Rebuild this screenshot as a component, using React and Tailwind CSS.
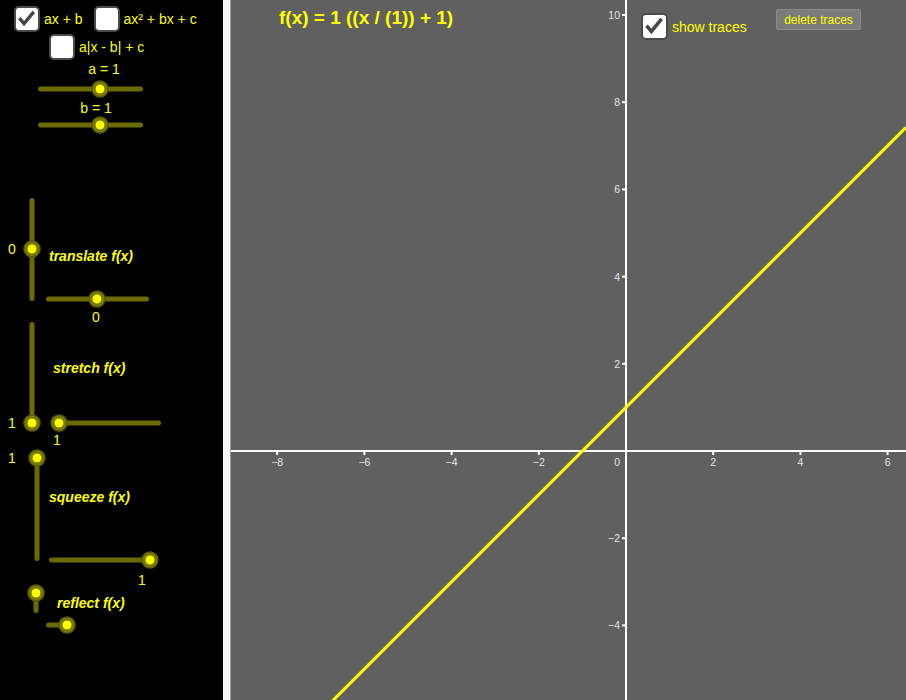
import React from "react";

const U = 43.6;
const OX = 626;
const OY = 451;

function CheckBox({ checked, big }) {
  return (
    <div
      className={
        big
          ? "h-[27px] w-[27px] shrink-0 rounded-[5px] border-2 border-[#4a4a4a] bg-white"
          : "h-[26px] w-[26px] shrink-0 rounded-[5px] border-2 border-[#4a4a4a] bg-white"
      }
    >
      {checked && (
        <svg viewBox="0 0 26 26" className="block h-full w-full">
          <path
            d="M4 12 L9.5 18.5 L21 4.5"
            fill="none"
            stroke="#464646"
            strokeWidth="4"
            strokeLinecap="butt"
            strokeLinejoin="miter"
          />
        </svg>
      )}
    </div>
  );
}

function Knob({ x, y }) {
  return (
    <g>
      <circle cx={x} cy={y} r="8" fill="#7d7d00" stroke="#5a5a00" strokeWidth="1.5" />
      <circle cx={x} cy={y} r="5" fill="#ffff00" stroke="#555500" strokeWidth="0.8" />
    </g>
  );
}

function Track({ x1, y1, x2, y2 }) {
  return (
    <line x1={x1} y1={y1} x2={x2} y2={y2} stroke="#6b6b00" strokeWidth="5" strokeLinecap="round" />
  );
}

function LeftPanel() {
  const label = "fill-[#ffff00] text-[14px]";
  const title = "fill-[#ffff00] text-[14px] font-bold italic";
  return (
    <div className="flex h-[700px] w-[223px] shrink-0 flex-col bg-black">
      <div className="flex flex-col gap-[1px] pt-[6px] text-[14px] leading-none text-[#ffff00]">
        <div className="flex h-[26px] items-center pl-[14px]">
          <CheckBox checked />
          <span className="ml-[4px]">ax + b</span>
          <div className="ml-[11px]">
            <CheckBox />
          </div>
          <span className="ml-[4px]">ax² + bx + c</span>
        </div>
        <div className="flex h-[27px] items-center pl-[49px]">
          <CheckBox />
          <span className="ml-[4px]">a|x - b| + c</span>
        </div>
      </div>
      <svg width="223" height="640" viewBox="0 60 223 640" className="block">
        <text x="104" y="74" textAnchor="middle" className={label}>a = 1</text>
        <Track x1={40.5} y1={89} x2={140.5} y2={89} />
        <Knob x={100} y={89} />
        <text x="96" y="113" textAnchor="middle" className={label}>b = 1</text>
        <Track x1={40.5} y1={125} x2={140.5} y2={125} />
        <Knob x={100} y={125} />

        <Track x1={32} y1={200.5} x2={32} y2={298.5} />
        <Knob x={32} y={249} />
        <text x="12" y="254" textAnchor="middle" className={label}>0</text>
        <text x="49" y="261" className={title}>translate f(x)</text>
        <Track x1={48.5} y1={299} x2={146.5} y2={299} />
        <Knob x={97} y={299} />
        <text x="96" y="322" textAnchor="middle" className={label}>0</text>

        <Track x1={32} y1={324.5} x2={32} y2={423} />
        <Knob x={32} y={423} />
        <text x="12" y="428" textAnchor="middle" className={label}>1</text>
        <text x="53" y="373" className={title}>stretch f(x)</text>
        <Track x1={59} y1={423} x2={158.5} y2={423} />
        <Knob x={59} y={423} />
        <text x="57" y="445" textAnchor="middle" className={label}>1</text>

        <Track x1={37} y1={458} x2={37} y2={558.5} />
        <Knob x={37} y={458} />
        <text x="12" y="463" textAnchor="middle" className={label}>1</text>
        <text x="49" y="502" className={title}>squeeze f(x)</text>
        <Track x1={51.5} y1={560} x2={150} y2={560} />
        <Knob x={150} y={560} />
        <text x="142" y="585" textAnchor="middle" className={label}>1</text>

        <Track x1={36} y1={593} x2={36} y2={610.5} />
        <Knob x={36} y={593} />
        <text x="57" y="608" className={title}>reflect f(x)</text>
        <Track x1={48.5} y1={625} x2={67} y2={625} />
        <Knob x={67} y={625} />
      </svg>
    </div>
  );
}

function fmt(v) {
  return v < 0 ? "\u2212" + Math.abs(v) : String(v);
}

function Graph() {
  const xs = [-8, -6, -4, -2, 2, 4, 6];
  const ys = [10, 8, 6, 4, 2, -2, -4];
  const lbl = "fill-[#e6e6e6] text-[10.5px]";
  const x1 = 231;
  const y1 = OY - ((x1 - OX) / U + 1) * U;
  const x2 = 906;
  const y2 = OY - ((x2 - OX) / U + 1) * U;
  return (
    <div className="relative h-[700px] flex-1 overflow-hidden bg-[#606060]">
      <svg width="675" height="700" viewBox="231 0 675 700" className="block">
        <line x1="231" y1={OY} x2="906" y2={OY} stroke="#ffffff" strokeWidth="2" />
        <line x1={OX} y1="0" x2={OX} y2="700" stroke="#ffffff" strokeWidth="2" />
        {xs.map((v) => {
          const px = OX + v * U;
          return (
            <g key={"x" + v}>
              <line x1={px} y1={OY} x2={px} y2={OY + 4} stroke="#ffffff" strokeWidth="2" />
              <text x={px} y={OY + 15} textAnchor="middle" className={lbl}>
                {fmt(v)}
              </text>
            </g>
          );
        })}
        {ys.map((v) => {
          const py = OY - v * U;
          return (
            <g key={"y" + v}>
              <line x1={OX - 4} y1={py} x2={OX} y2={py} stroke="#ffffff" strokeWidth="2" />
              <text x={OX - 6} y={py + 4} textAnchor="end" className={lbl}>
                {fmt(v)}
              </text>
            </g>
          );
        })}
        <text x={OX - 6} y={OY + 15} textAnchor="end" className={lbl}>0</text>
        <line x1={x1} y1={y1} x2={x2} y2={y2} stroke="#ffff00" strokeWidth="3" />
      </svg>

      <div className="absolute left-[48px] top-[6px] text-[19px] font-bold leading-[24px] text-[#ffff00]">
        f(x) = 1 ((x / (1)) + 1)
      </div>
      <div className="absolute left-[410px] top-[13px] flex items-center">
        <CheckBox checked big />
        <span className="ml-[4px] text-[14px] leading-none text-[#ffff00]">show traces</span>
      </div>
      <div className="absolute left-[545px] top-[9px] flex h-[21px] w-[85px] items-center justify-center rounded-[2px] border border-[#8a8a8a] bg-[#7b7b7b] text-[12px] leading-none text-[#ffff00]">
        delete traces
      </div>
    </div>
  );
}

export default function App() {
  return (
    <div className="flex h-[700px] w-[906px] overflow-hidden bg-white font-['Liberation_Sans',Arial,sans-serif]">
      <LeftPanel />
      <div className="h-[700px] w-[7px] shrink-0 bg-[#f8f8f8]" />
      <div className="h-[700px] w-[1px] shrink-0 bg-[#a0a0a0]" />
      <Graph />
    </div>
  );
}
